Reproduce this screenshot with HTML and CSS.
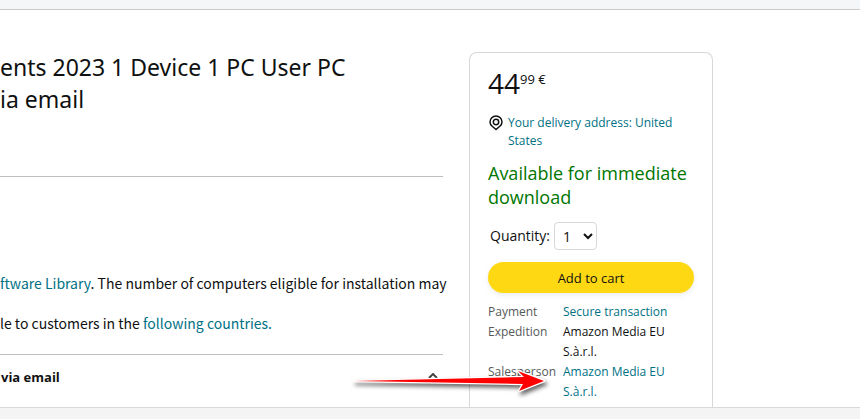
FILE: index.html
```html
<!DOCTYPE html>
<html lang="en">
  <head>
    <meta charset="UTF-8">
    <meta name="viewport" content="width=device-width, initial-scale=1.0">
    <title>Product</title>
    <link rel="stylesheet" href="styles.css">
  </head>
  <body>
    <div class="top-bar"></div>
    <main class="product">
      <section class="details">
        <h1>ents 2023 1 Device 1 PC User PC<br>ia email</h1>
        <div class="notes">
          <p><a href="#">ftware Library</a>. The number of computers eligible for installation may</p>
          <p>le to customers in the <a href="#">following countries.</a></p>
        </div>
        <button class="expander" type="button">
          <span>via email</span>
          <svg width="10" height="8" viewBox="0 0 10 8"><path d="M1 5L5 1L9 5" fill="none" stroke="#444" stroke-width="2"/></svg>
        </button>
      </section>
      <aside class="buy-box">
        <div class="price">44<sup>99 €</sup></div>
        <a class="address" href="#">
          <svg width="16" height="18" viewBox="0 0 16 18" fill="none" stroke="#0f1111" stroke-width="1.5"><path d="M8 15.5L4.2 12.2C2.8 11 2 9.500 2 8A6 6 0 0 1 14 8C14 9.500 13.200 11 11.800 12.200Z"/><circle cx="8" cy="8" r="2.700"/></svg>
          <span>Your delivery address: United States</span>
        </a>
        <p class="stock">Available for immediate download</p>
        <div class="quantity">
          <label for="qty">Quantity:</label>
          <select id="qty">
            <option>1</option>
            <option>2</option>
            <option>3</option>
          </select>
        </div>
        <button class="add-to-cart" type="button">Add to cart</button>
        <dl class="seller">
          <dt>Payment</dt>
          <dd><a href="#">Secure transaction</a></dd>
          <dt>Expedition</dt>
          <dd>Amazon Media EU S.à.r.l.</dd>
          <dt>Salesperson</dt>
          <dd><a href="#">Amazon Media EU S.à.r.l.</a></dd>
        </dl>
      </aside>
      <svg class="arrow" width="204" height="38" viewBox="0 0 204 38">
        <path d="M5 12L175 8L169 2L195 12L170 22L174 15Z" fill="#fff" stroke="#fff" stroke-width="2.500" stroke-linejoin="round"/>
        <path d="M5 12L175 8L169 2L195 12L170 22L174 15Z" fill="#f00"/>
      </svg>
    </main>
    <div class="bottom-bar"></div>
  </body>
</html>
```
FILE: styles.css
```css
* {
  box-sizing: border-box;
}

body {
  margin: 0;
  min-height: 100vh;
  display: flex;
  flex-direction: column;
  overflow: hidden;
  background-color: #fff;
  color: #0f1111;
  font-family: "Open Sans", "Noto Sans", sans-serif;
  font-size: 14px;
  line-height: 20px;
}

h1, p, dl, dd {
  margin: 0;
}

a {
  color: #007185;
  text-decoration: none;
}

a:hover {
  text-decoration: underline;
}

button, select {
  font-family: inherit;
  color: #0f1111;
  cursor: pointer;
}

.top-bar {
  height: 10px;
  background-color: #f5f6f8;
  border-bottom: 1px solid #c8cacc;
}

.bottom-bar {
  flex: 1;
  min-height: 12px;
  background-color: #f4f4f4;
  border-top: 1px solid #d9d9d9;
}

.product {
  position: relative;
  display: flex;
  gap: 26px;
  padding: 41px 147px 0 0;
}

.details {
  flex: 1;
  min-width: 0;
  white-space: nowrap;
}

h1 {
  padding-bottom: 61px;
  font-family: "Noto Sans", sans-serif;
  font-size: 23px;
  font-weight: 400;
  line-height: 32px;
}

.notes {
  display: grid;
  gap: 20px;
  padding: 96px 0 21px;
  border-top: 1px solid #bbbfbf;
  border-bottom: 1px solid #bbbfbf;
  font-family: "Noto Sans CJK SC", "Open Sans", sans-serif;
}

.expander {
  display: flex;
  justify-content: space-between;
  align-items: center;
  width: 100%;
  padding: 12px 5px 20px 1px;
  border: none;
  background: none;
  font-size: 13px;
  font-weight: 700;
  line-height: 20px;
}

.buy-box {
  width: 244px;
  margin-top: 1px;
  padding: 14px 18px 5px;
  border: 1px solid #d5d9d9;
  border-bottom: none;
  border-radius: 8px 8px 0 0;
}

.price {
  display: flex;
  font-size: 28px;
  line-height: 32px;
}

.price sup {
  font-size: 13px;
  line-height: 24px;
}

.address {
  display: flex;
  gap: 4px;
  margin-top: 15px;
  font-size: 12px;
  line-height: 18px;
}

.address svg {
  flex: none;
}

.stock {
  margin-top: 11px;
  color: #007600;
  font-size: 18px;
  line-height: 24px;
}

.quantity {
  display: flex;
  align-items: center;
  gap: 4px;
  margin-top: 13px;
  padding-left: 2px;
}

.quantity select {
  width: 43px;
  height: 28px;
  padding: 0 0 0 4px;
  border: 1px solid #d5d9d9;
  border-radius: 4px;
  background-color: #fff;
  font-size: 14px;
}

.add-to-cart {
  display: block;
  width: 100%;
  height: 31px;
  margin-top: 12px;
  border: none;
  border-radius: 16px;
  background-color: #ffd814;
  box-shadow: 0 2px 5px rgba(213, 217, 217, 0.5);
  font-size: 13px;
}

.seller {
  display: grid;
  grid-template-columns: 75px 1fr;
  margin-top: 9px;
  font-size: 12px;
}

.seller dt {
  color: #565959;
}

.arrow {
  position: absolute;
  top: 359px;
  left: 349px;
  filter: drop-shadow(2px 3px 2px rgba(0, 0, 0, 0.6));
}
```
